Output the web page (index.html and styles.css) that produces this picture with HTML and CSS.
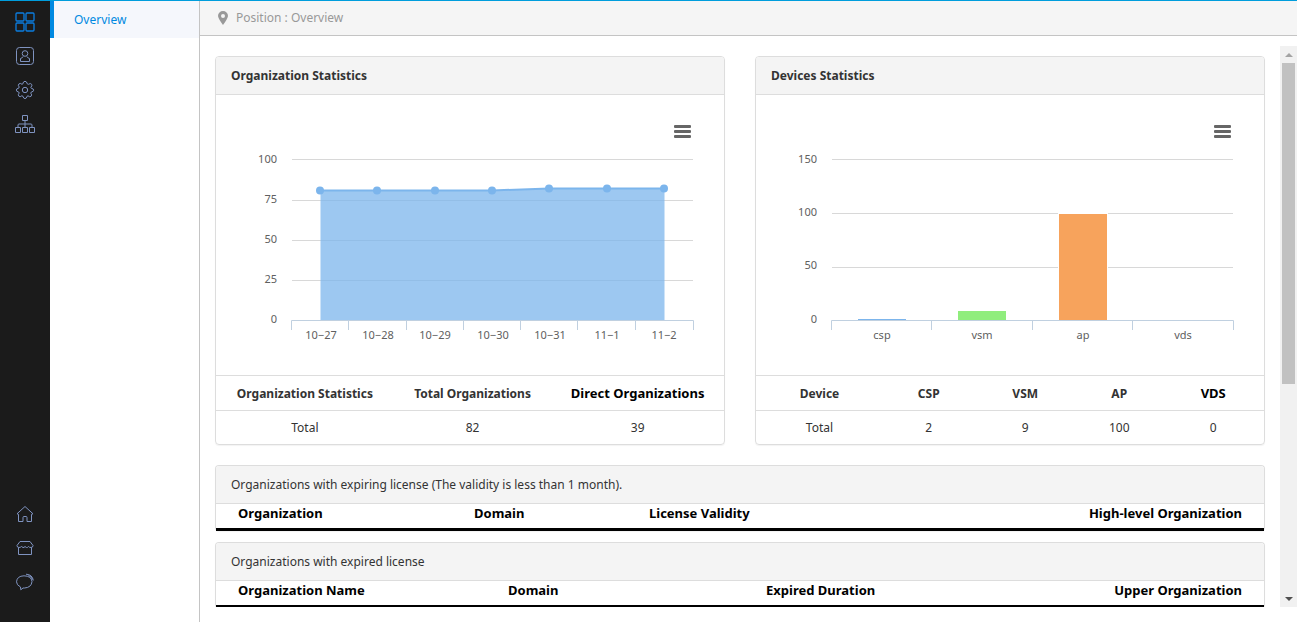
FILE: index.html
```html
<!DOCTYPE html>
<html lang="en">
<head>
    <meta charset="UTF-8">
    <title>Overview</title>
    <link rel="stylesheet" href="styles.css">
</head>
<body>
    <nav class="sidebar">
        <div class="icon-group">
            <a href="#" class="active" aria-label="Overview"><svg width="22" height="22" viewBox="0 0 22 22"><rect x="2" y="2" width="8" height="8" rx="1"/><rect x="12" y="2" width="8" height="8" rx="1"/><rect x="2" y="12" width="8" height="8" rx="1"/><rect x="12" y="12" width="8" height="8" rx="1"/></svg></a>
            <a href="#" aria-label="Users"><svg width="22" height="22" viewBox="0 0 22 22"><rect x="2.500" y="2.500" width="17" height="17" rx="3"/><circle cx="11" cy="8.500" r="2.800"/><path d="M9 11.500 L8.500 12.500 L6.500 13.500 L6.500 16.500 L15.500 16.500 L15.500 13.500 L13.500 12.500 L13 11.500"/></svg></a>
            <a href="#" aria-label="Settings"><svg width="22" height="22" viewBox="0 0 22 22"><path d="M9.500 3 Q11 1.500 12.500 3 L13.200 4.800 L14.500 5.300 L16.300 4.500 Q18.200 5 17.900 6.800 L16.800 8.300 L17.300 9.300 L19.200 10 Q20 11.200 19.200 12.300 L17.300 13 L16.800 14.200 L17.700 15.900 Q17.500 17.800 15.600 17.700 L14 16.800 L13 17.300 L12.300 19 Q11 20.300 9.700 19 L9 17.300 L7.800 16.800 L6.200 17.700 Q4.300 17.500 4.300 15.700 L5.200 14 L4.700 13 L2.800 12.300 Q2 11 2.800 9.900 L4.700 9.200 L5.200 8 L4.300 6.300 Q4.500 4.500 6.300 4.400 L8 5.300 L8.900 4.800 Z"/><circle cx="11" cy="11" r="2.700"/></svg></a>
            <a href="#" aria-label="Organizations"><svg width="22" height="22" viewBox="0 0 22 22"><path d="M8.500 2.500h5v5h-5z M1.500 14.500h5v5h-5z M8.500 14.500h5v5h-5z M15.500 14.500h5v5h-5z M11 7.500v7 M4 14.500v-2.500q0-1 1-1h12q1 0 1 1v2.500"/></svg></a>
        </div>
        <div class="icon-group">
            <a href="#" aria-label="Home"><svg width="22" height="22" viewBox="0 0 22 22"><path d="M3 10.800 L11 3.500 L19 10.800 L17.500 11.300 L17.500 18.500 L13 18.500 L13 14.500 Q13 13.500 12 13.500 L10 13.500 Q9 13.500 9 14.500 L9 18.500 L4.500 18.500 L4.500 11.300 Z"/></svg></a>
            <a href="#" aria-label="Store"><svg width="22" height="22" viewBox="0 0 22 22"><path d="M6 4.500 H16 L19 8.500 Q19 10.500 17 10.500 Q15 10.500 14.500 9.500 Q13.500 10.800 12.500 10.500 L11 9.500 Q10 10.800 9 10.500 L7.500 9.500 Q6.500 10.500 5 10.500 Q3 10.500 3 8.500 Z M4.500 10.500 V17.500 H17.500 V10.500"/></svg></a>
            <a href="#" aria-label="Messages"><svg width="22" height="22" viewBox="0 0 22 22"><path d="M6.500 16 Q2.500 14 2.500 10.800 Q3 5 10 4.800 Q17.300 5 18 10.500 Q17.500 16.500 10.500 17 L9 17 L6.800 18.800 Z M12 3.200 Q18.500 3.500 19.300 9.500 M14.500 4.500 Q17.500 5.500 18.500 8.500"/></svg></a>
        </div>
    </nav>

    <aside class="submenu">
        <a href="#">Overview</a>
    </aside>

    <main class="main">
        <header class="position">
            <svg width="10" height="14" viewBox="0 0 10 14"><path fill-rule="evenodd" d="M5 0 A5 5 0 0 1 10 5 Q9.500 8 5 14 Q0.500 8 0 5 A5 5 0 0 1 5 0 Z M5 3 A2 2 0 0 0 5 7 A2 2 0 0 0 5 3 Z"/></svg>
            <span>Position : Overview</span>
        </header>

        <div class="scroll-area">
            <div class="content">
                <div class="row">
                    <section class="panel">
                        <h3>Organization Statistics</h3>
                        <div class="chart">
                            <svg viewBox="0 0 508 280" role="img" aria-label="Organization Statistics">
                                <path class="grid" d="M76 64.500H477 M76 105.500H477 M76 145.500H477 M76 185.500H477"/>
                                <path class="area" d="M104.500 95.500 L276 95.500 L333 93.500 L448.500 93.500 V225 H104.500 Z"/>
                                <path class="line" d="M104 95.500 L276 95.500 L333 93.500 L448 93.500"/>
                                <g class="points">
                                    <circle cx="104" cy="95.500" r="4"/><circle cx="161" cy="95.500" r="4"/><circle cx="219" cy="95.500" r="4"/><circle cx="276" cy="95.500" r="4"/><circle cx="333" cy="93.500" r="4"/><circle cx="391" cy="93.500" r="4"/><circle cx="448" cy="93.500" r="4"/>
                                </g>
                                <path class="axis" d="M75.500 235V225.500H477.500V235 M132.500 225V235 M190.500 225V235 M247.500 225V235 M304.500 225V235 M361.500 225V235 M419.500 225V235"/>
                                <g class="y-labels">
                                    <text x="61" y="68">100</text><text x="61" y="108">75</text><text x="61" y="148">50</text><text x="61" y="188">25</text><text x="61" y="228">0</text>
                                </g>
                                <g class="x-labels">
                                    <text x="105" y="244">10−27</text><text x="162" y="244">10−28</text><text x="219" y="244">10−29</text><text x="277" y="244">10−30</text><text x="334" y="244">10−31</text><text x="391" y="244">11−1</text><text x="448" y="244">11−2</text>
                                </g>
                            </svg>
                            <button class="chart-menu" aria-label="Chart menu"><i></i><i></i><i></i></button>
                        </div>
                        <table class="stats org-stats">
                            <colgroup><col><col><col></colgroup>
                            <tr><td>Organization Statistics</td><td>Total Organizations</td><th>Direct Organizations</th></tr>
                            <tr><td>Total</td><td>82</td><td>39</td></tr>
                        </table>
                    </section>

                    <section class="panel">
                        <h3>Devices Statistics</h3>
                        <div class="chart">
                            <svg viewBox="0 0 508 280" role="img" aria-label="Devices Statistics">
                                <path class="grid" d="M76 64.500H477 M76 118.500H477 M76 172.500H477"/>
                                <rect class="bar-csp" x="102" y="224" width="48" height="1"/>
                                <rect class="bar-vsm" x="202" y="216" width="48" height="9"/>
                                <rect class="bar-ap" x="302.500" y="118.500" width="49" height="107"/>
                                <path class="axis" d="M75.500 235V225.500H477.500V235 M175.500 225V235 M276.500 225V235 M376.500 225V235"/>
                                <g class="y-labels">
                                    <text x="61" y="68">150</text><text x="61" y="121">100</text><text x="61" y="174">50</text><text x="61" y="228">0</text>
                                </g>
                                <g class="x-labels">
                                    <text x="126" y="244">csp</text><text x="226" y="244">vsm</text><text x="327" y="244">ap</text><text x="427" y="244">vds</text>
                                </g>
                            </svg>
                            <button class="chart-menu" aria-label="Chart menu"><i></i><i></i><i></i></button>
                        </div>
                        <table class="stats device-stats">
                            <colgroup><col><col><col><col><col></colgroup>
                            <tr><td>Device</td><td>CSP</td><td>VSM</td><td>AP</td><th>VDS</th></tr>
                            <tr><td>Total</td><td>2</td><td>9</td><td>100</td><td>0</td></tr>
                        </table>
                    </section>
                </div>

                <section class="panel license">
                    <p>Organizations with expiring license (The validity is less than 1 month).</p>
                    <table class="expiring">
                        <colgroup><col><col><col><col></colgroup>
                        <tr><th>Organization</th><th>Domain</th><th>License Validity</th><th>High-level Organization</th></tr>
                    </table>
                </section>

                <section class="panel license">
                    <p>Organizations with expired license</p>
                    <table class="expired">
                        <colgroup><col><col><col><col></colgroup>
                        <tr><th>Organization Name</th><th>Domain</th><th>Expired Duration</th><th>Upper Organization</th></tr>
                    </table>
                </section>
            </div>

            <div class="scrollbar">
                <span class="arrow up"></span>
                <div class="track"><div class="thumb"></div></div>
                <span class="arrow down"></span>
            </div>
        </div>
    </main>
</body>
</html>
```
FILE: styles.css
```css
* { box-sizing: border-box; }
body { margin: 0; height: 100vh; display: flex; overflow: hidden; border-top: 1px solid #009ddc; background: #fff; color: #333; font: 12px/20px "Noto Sans", "Open Sans", sans-serif; }
a { text-decoration: none; }

/* left icon bar */
.sidebar { flex: 0 0 50px; background: #1b1b1b; display: flex; flex-direction: column; justify-content: space-between; padding: 4px 0 23px; }
.sidebar a { display: flex; align-items: center; justify-content: center; height: 34px; }
.sidebar svg { fill: none; stroke: #7f93c0; stroke-width: 1; }
.sidebar .active svg { stroke: #0b7de0; stroke-width: 1.3; }

.submenu { flex: 0 0 150px; border-right: 1px solid #c4c4c4; }
.submenu a { display: block; height: 37px; line-height: 37px; padding-left: 20px; border-left: 4px solid #0089e1; background: #f5f7fc; color: #0089e1; }

.main { flex: 1; min-width: 0; display: flex; flex-direction: column; }
.position { height: 35px; flex: none; display: flex; align-items: center; gap: 8px; padding-left: 18px; background: #f5f5f5; border-bottom: 1px solid #c4c4c4; color: #999; }
.position svg { fill: #999; }

.scroll-area { flex: 1; min-height: 0; display: flex; margin: 10px 0 15px; overflow: hidden; }
.content { flex: 1; min-width: 0; padding: 10px 15px 0; }

.row { display: flex; gap: 30px; margin-bottom: 20px; }
.row .panel { flex: 1; min-width: 0; }
.panel { border: 1px solid #ddd; border-radius: 4px; box-shadow: 0 1px 1px rgba(0, 0, 0, .05); }
.panel h3, .panel p { margin: 0; height: 38px; line-height: 37px; padding: 0 15px; font-size: 12px; background: #f4f4f4; border-bottom: 1px solid #ddd; border-radius: 3px 3px 0 0; }

/* charts */
.chart { position: relative; }
.chart svg { display: block; width: 100%; }
.grid { stroke: #d8d8d8; fill: none; }
.axis { stroke: #c0d0e0; fill: none; }
.area { fill: #7cb5ec; fill-opacity: .75; }
.line { stroke: #7cb5ec; stroke-width: 2; fill: none; }
.points { fill: #7cb5ec; }
.bar-csp { fill: #7cb5ec; }
.bar-vsm { fill: #90ed7d; }
.bar-ap { fill: #f7a35c; stroke: #fff; }
.y-labels, .x-labels { font-size: 11px; fill: #606060; }
.y-labels { text-anchor: end; }
.x-labels { text-anchor: middle; }
.chart-menu { position: absolute; top: 26px; right: 29px; width: 25px; height: 21px; padding: 4px; border: 0; background: none; display: flex; flex-direction: column; gap: 2px; cursor: pointer; }
.chart-menu i { height: 3px; border-radius: 1px; background: #666; }

/* tables */
table { width: 100%; border-collapse: separate; border-spacing: 0; table-layout: fixed; }
th, td { padding: 0; white-space: nowrap; }
th { color: #000; font-size: 13px; font-weight: bold; }
.stats td, .stats th { height: 34px; border-top: 1px solid #ddd; text-align: center; }
.stats tr:first-child td, .stats tr:first-child th { height: 35px; padding-top: 7px; vertical-align: baseline; }
.stats tr:first-child td { font-weight: bold; }
.org-stats col:nth-child(1) { width: 35%; }
.org-stats col:nth-child(2) { width: 31%; }
.org-stats col:nth-child(3) { width: 34%; }
.device-stats col:nth-child(1) { width: 25%; }
.device-stats col:nth-child(2) { width: 18%; }
.device-stats col:nth-child(3) { width: 20%; }
.device-stats col:nth-child(4) { width: 17%; }
.device-stats col:nth-child(5) { width: 20%; }

.license { margin-bottom: 11px; border-bottom: 0; }
.license th { height: 27px; line-height: 18px; padding: 0 22px 6px; border-bottom: 3px solid #000; text-align: left; }
.license th:last-child { text-align: right; }
.expiring col:nth-child(1) { width: 236px; }
.expiring col:nth-child(2) { width: 175px; }
.expired col:nth-child(1) { width: 270px; }
.expired col:nth-child(2) { width: 258px; }

.scrollbar { flex: 0 0 17px; background: #f1f1f1; display: flex; flex-direction: column; }
.arrow { height: 17px; display: flex; align-items: center; justify-content: center; }
.arrow::before { content: ""; border: 4px solid transparent; }
.up::before { border-top: 0; border-bottom-color: #a3a3a3; }
.down::before { border-bottom: 0; border-top-color: #505050; }
.track { flex: 1; padding: 0 2px; }
.thumb { height: 61%; background: #c1c1c1; }
```
